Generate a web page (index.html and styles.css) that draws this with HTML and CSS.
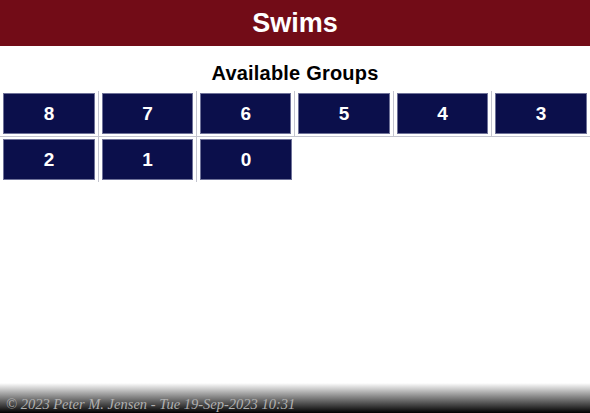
FILE: index.html
```html
<!DOCTYPE html>
<html>
<head>
<meta charset="utf-8">
<title>Swims</title>
<link rel="stylesheet" href="styles.css">
</head>
<body>
<header class="topbar"><h1 class="title">Swims</h1></header>
<main class="content">
  <h2 class="subtitle">Available Groups</h2>
  <table class="groups">
    <tr>
      <td><button class="grp">8</button></td>
      <td><button class="grp">7</button></td>
      <td><button class="grp">6</button></td>
      <td><button class="grp">5</button></td>
      <td><button class="grp">4</button></td>
      <td><button class="grp">3</button></td>
    </tr>
    <tr>
      <td><button class="grp">2</button></td>
      <td><button class="grp">1</button></td>
      <td><button class="grp">0</button></td>
      <td class="empty"></td>
      <td class="empty"></td>
      <td class="empty"></td>
    </tr>
  </table>
</main>
<footer class="footer">© 2023 Peter M. Jensen - Tue 19-Sep-2023 10:31</footer>
</body>
</html>
```
FILE: styles.css
```css
html, body {
  margin: 0;
  padding: 0;
}
body {
  height: 100vh;
  display: flex;
  flex-direction: column;
  font-family: "Liberation Sans", Arial, sans-serif;
  background: #fff;
}
.topbar {
  background: #720c17;
  height: 46px;
  display: flex;
  align-items: center;
  justify-content: center;
}
.title {
  margin: 0;
  color: #fff;
  font-size: 27px;
  font-weight: bold;
  line-height: 30px;
}
.content {
  flex: 1;
}
.subtitle {
  margin: 15px 0 6px;
  font-size: 20px;
  letter-spacing: 0.2px;
  line-height: 24px;
  text-align: center;
  color: #000;
}
.groups {
  width: 100%;
  border-collapse: collapse;
  table-layout: fixed;
}
.groups td {
  padding: 2px 3px;
  height: 41px;
}
.groups td + td {
  border-left: 1px solid #c4c5cf;
}
.groups tr + tr td {
  border-top: 1px solid #c4c5cf;
}
.groups tr + tr td.empty {
  border-left: none;
}
.grp {
  display: block;
  width: 100%;
  height: 41px;
  margin: 0;
  background: #0b0f4b;
  border: 1px solid #6f7299;
  color: #fff;
  font-family: "Liberation Sans", Arial, sans-serif;
  font-size: 19px;
  font-weight: bold;
  padding: 0;
}
.footer {
  height: 30px;
  background: linear-gradient(to bottom, #ffffff 0%, #8a8a8a 45%, #000000 100%);
  color: #b0b0b0;
  font-family: "Liberation Serif", "Times New Roman", serif;
  font-style: italic;
  font-size: 14.5px;
  line-height: 16px;
  padding: 13px 0 0 6px;
  box-sizing: border-box;
}
```
